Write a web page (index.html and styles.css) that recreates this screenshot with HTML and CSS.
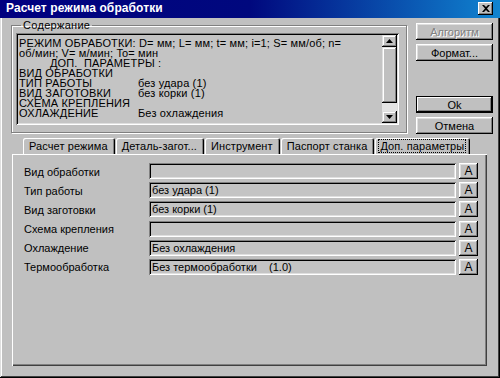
FILE: index.html
```html
<!DOCTYPE html>
<html>
<head>
	<meta charset="utf-8">
	<link rel="stylesheet" href="styles.css">
</head>
<body>
	<div class="window">
		<div class="titlebar">
			<span class="title">Расчет режима обработки</span>
			<span class="close">
				<svg width="8" height="7" viewBox="0 0 8 7"><path d="M0 0h2l2 2 2-2h2L5 3.5 8 7H6L4 5 2 7H0l3-3.5z" fill="#000"/></svg>
			</span>
		</div>

		<div class="top">
			<fieldset class="group">
				<legend>Содержание</legend>
				<div class="listing">
					<div class="listing-text">
						<div>РЕЖИМ ОБРАБОТКИ: D= мм; L= мм; t= мм; i=1; S= мм/об; n=</div>
						<div>об/мин; V= м/мин; To= мин</div>
						<div class="indent">ДОП.&nbsp; ПАРАМЕТРЫ :</div>
						<div>ВИД ОБРАБОТКИ</div>
						<div class="pair"><span>ТИП РАБОТЫ</span><span>без удара (1)</span></div>
						<div class="pair"><span>ВИД ЗАГОТОВКИ</span><span>без корки (1)</span></div>
						<div>СХЕМА КРЕПЛЕНИЯ</div>
						<div class="pair"><span>ОХЛАЖДЕНИЕ</span><span>Без охлаждения</span></div>
					</div>
					<div class="scrollbar">
						<div class="sb-btn"><svg width="7" height="4" viewBox="0 0 7 4"><path d="M3.5 0L7 4H0z" fill="#000"/></svg></div>
						<div class="sb-thumb"></div>
						<div class="sb-track"></div>
						<div class="sb-btn"><svg width="7" height="4" viewBox="0 0 7 4"><path d="M0 0h7L3.5 4z" fill="#000"/></svg></div>
					</div>
				</div>
			</fieldset>

			<div class="actions">
				<button class="btn disabled">Алгоритм</button>
				<button class="btn">Формат...</button>
				<div class="spacer"></div>
				<button class="btn default">Ok</button>
				<button class="btn">Отмена</button>
			</div>
		</div>

		<div class="tabs">
			<div class="tab">Расчет режима</div>
			<div class="tab">Деталь-загот...</div>
			<div class="tab">Инструмент</div>
			<div class="tab">Паспорт станка</div>
			<div class="tab active"><span>Доп. параметры</span></div>
		</div>

		<div class="panel">
			<div class="form">
				<label>Вид обработки</label>
				<div class="field"></div>
				<button class="abtn">A</button>

				<label>Тип работы</label>
				<div class="field">без удара (1)</div>
				<button class="abtn">A</button>

				<label>Вид заготовки</label>
				<div class="field">без корки (1)</div>
				<button class="abtn">A</button>

				<label>Схема крепления</label>
				<div class="field"></div>
				<button class="abtn">A</button>

				<label>Охлаждение</label>
				<div class="field">Без охлаждения</div>
				<button class="abtn">A</button>

				<label>Термообработка</label>
				<div class="field">Без термообработки&nbsp;&nbsp;&nbsp; (1.0)</div>
				<button class="abtn">A</button>
			</div>
		</div>
	</div>
</body>
</html>
```

FILE: styles.css
```css
* {
	box-sizing: border-box;
}

body {
	margin: 0;
	background: #000;
	font-family: "Liberation Sans", Arial, sans-serif;
	font-size: 11px;
	color: #000;
}

.window {
	width: 500px;
	height: 378px;
	background: #c0c0c0;
	padding: 0 3px 4px 3px;
	box-shadow: inset -1px -1px #000, inset 1px 1px #dfdfdf, inset -2px -2px #404040, inset 2px 2px #fff;
	display: flex;
	flex-direction: column;
}

/* title bar */
.titlebar {
	margin: 0 -3px;
	height: 18px;
	background: linear-gradient(to right, #000080 0%, #00087e 50%, #1084d0 100%);
	display: flex;
	align-items: center;
	padding: 0 6px 2px 6px;
}
.title {
	flex: 1;
	color: #fff;
	font-weight: bold;
	font-size: 12px;
	letter-spacing: 0.1px;
}
.close {
	width: 15px;
	height: 13px;
	background: #c0c0c0;
	box-shadow: inset -1px -1px #000, inset 1px 1px #fff, inset -2px -2px #808080;
	display: flex;
	align-items: center;
	justify-content: center;
	margin-right: 1px;
}

/* top part: contents + buttons */
.top {
	display: flex;
	margin-top: 1px;
}

.group {
	margin: 0 0 0 8px;
	padding: 1px 7px 5px 4px;
	width: 396px;
	height: 114px;
	border: 1px solid #808080;
	box-shadow: 1px 1px 0 #fff, inset 1px 1px 0 #fff;
}
.group legend {
	padding: 0 2px;
	margin-left: 5px;
	line-height: 13px;
	letter-spacing: 0.3px;
}

.listing {
	display: flex;
	height: 92px;
	background: #c4c4c4;
	box-shadow: inset 1px 1px #808080, inset -1px -1px #fff, inset 2px 2px #000, inset -2px -2px #dfdfdf;
	padding: 2px;
}
.listing-text {
	flex: 1;
	padding: 3px 0 0 1px;
	line-height: 10px;
	white-space: nowrap;
	overflow: hidden;
	letter-spacing: 0.15px;
}
.listing-text .indent {
	padding-left: 31px;
}
.pair span:first-child {
	display: inline-block;
	width: 119px;
}

.scrollbar {
	width: 15px;
	display: flex;
	flex-direction: column;
}
.sb-btn {
	height: 12px;
	background: #c0c0c0;
	box-shadow: inset -1px -1px #000, inset 1px 1px #dfdfdf, inset -2px -2px #808080, inset 2px 2px #fff;
	display: flex;
	align-items: center;
	justify-content: center;
}
.sb-thumb {
	flex: 1;
	background: #c0c0c0;
	box-shadow: inset -1px -1px #000, inset 1px 1px #dfdfdf, inset -2px -2px #808080, inset 2px 2px #fff;
}
.sb-track {
	height: 8px;
	background: #e4e4e4;
}

.actions {
	margin: 4px 0 0 9px;
	width: 77px;
	display: flex;
	flex-direction: column;
	gap: 4px;
}
.spacer {
	height: 27px;
}

.btn {
	height: 17px;
	padding: 0;
	border: none;
	background: #c0c0c0;
	font: inherit;
	box-shadow: inset -1px -1px #000, inset 1px 1px #fff, inset -2px -2px #808080, inset 2px 2px #dfdfdf;
}
.btn.disabled {
	color: #808080;
	text-shadow: 1px 1px 0 #fff;
}
.btn.default {
	box-shadow: inset 0 0 0 1px #000, inset -2px -2px #000, inset 2px 2px #fff, inset -3px -3px #808080;
}

/* tabs */
.tabs {
	display: flex;
	margin: 4px 0 0 20px;
	height: 16px;
	gap: 1px;
}
.tab {
	padding: 2px 7px 0 6px;
	background: #c0c0c0;
	box-shadow: inset 1px 1px #fff, inset -1px 0 #000, inset -2px 0 #808080;
	border-radius: 2px 2px 0 0;
	white-space: nowrap;
	line-height: 13px;
	letter-spacing: 0.1px;
}
.tab.active {
	padding: 1px 4px 0 3px;
}
.tab.active span {
	display: inline-block;
	border: 1px dotted #000;
	padding: 0 1px;
	line-height: 12px;
}

/* page */
.panel {
	flex: 1;
	margin: 0 10px 8px 9px;
	background: #c0c0c0;
	box-shadow: inset 1px 1px #fff, inset -1px -1px #404040, inset -2px -2px #808080;
	padding: 9px 0 0 12px;
}

.form {
	display: grid;
	grid-template-columns: 122px 307px 19px;
	grid-auto-rows: 16px;
	row-gap: 3.2px;
	column-gap: 3px;
	align-items: center;
}
.form label {
	padding-top: 1px;
}
.field {
	height: 16px;
	background: #c4c4c4;
	box-shadow: inset 1px 1px #808080, inset -1px -1px #fff, inset 2px 2px #000, inset -2px -2px #dfdfdf;
	padding: 2px 3px 0 3px;
	line-height: 13px;
	white-space: nowrap;
}
.abtn {
	height: 16px;
	padding: 0;
	border: none;
	background: #c0c0c0;
	font: inherit;
	font-size: 12px;
	box-shadow: inset -1px -1px #000, inset 1px 1px #fff, inset -2px -2px #808080, inset 2px 2px #dfdfdf;
}
```
